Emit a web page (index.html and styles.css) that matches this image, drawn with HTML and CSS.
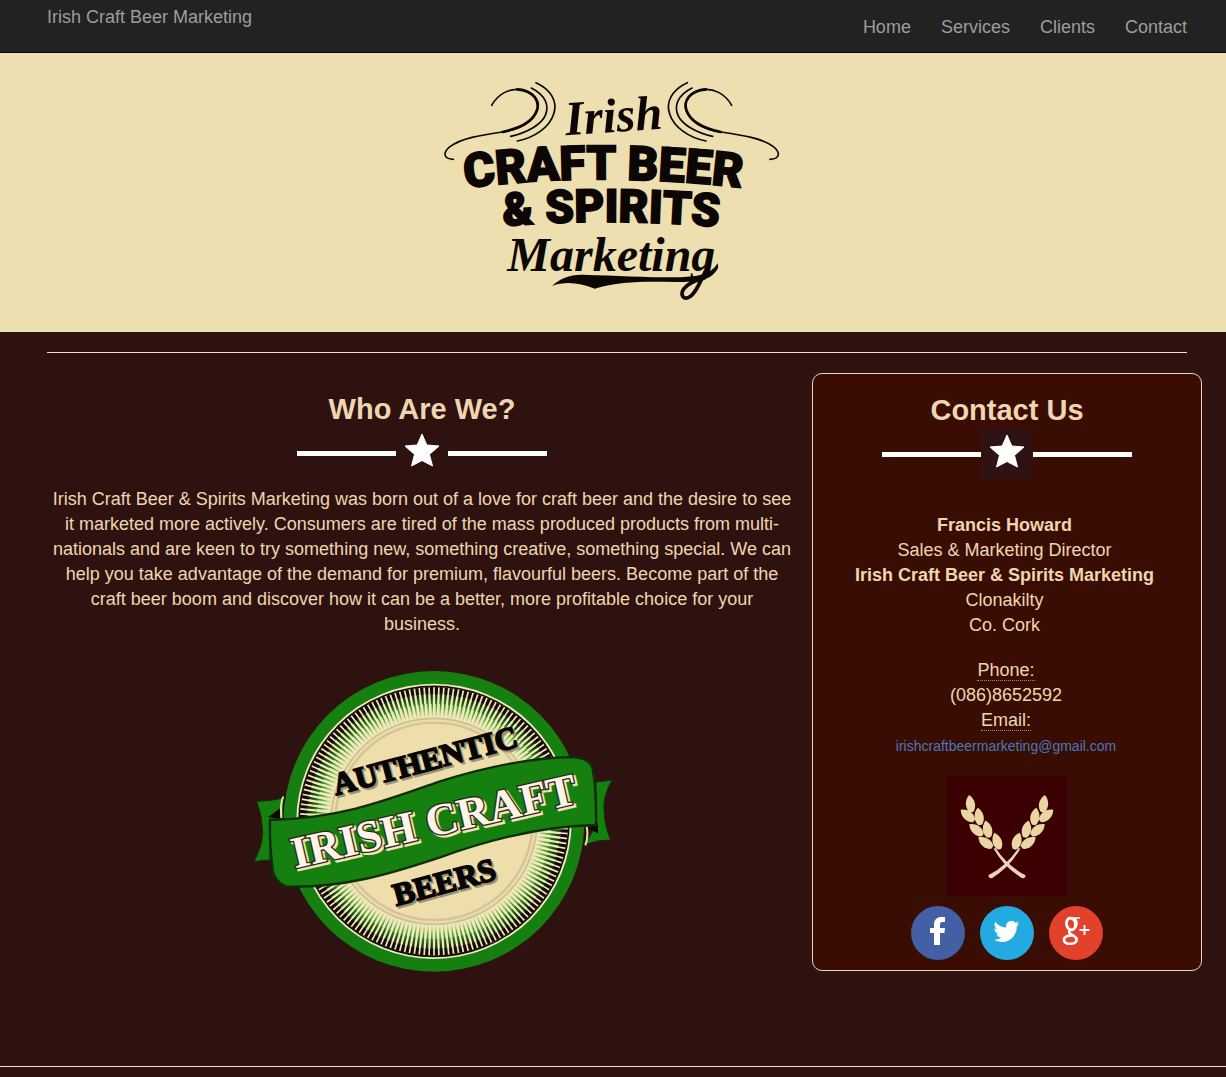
FILE: index.html
```html
<!DOCTYPE html>
<html lang="en">
<head>
<meta charset="utf-8">
<title>Irish Craft Beer Marketing</title>
<meta name="viewport" content="width=device-width, initial-scale=1">
<link rel="stylesheet" href="styles.css">
</head>
<body>
<nav class="navbar">
  <div class="container navbar-inner">
    <a class="brand" href="#">Irish Craft Beer Marketing</a>
    <ul class="nav-links">
      <li><a href="#home">Home</a></li>
      <li><a href="#services">Services</a></li>
      <li><a href="#clients">Clients</a></li>
      <li><a href="#contact">Contact</a></li>
    </ul>
  </div>
</nav>

<header class="masthead" id="home">
  <svg class="logo" viewBox="0 0 1080 720" role="img" aria-label="Irish Craft Beer &amp; Spirits Marketing">
    <defs>
      <path id="arc-craft" d="M106 354Q535 300 985 360"/>
      <path id="arc-spirits" d="M220 468Q550 442 900 474"/>
      <g id="flourish" fill="none" stroke="#0c0705" stroke-linecap="round">
        <path stroke-width="5" d="M185 106C205 70 240 54 274 59C310 66 328 93 322 119C313 155 270 177 218 186C150 196 95 204 60 230C40 246 37 266 70 268"/>
        <path stroke-width="8" d="M262 58C312 62 330 94 321 120C310 153 270 175 218 186"/>
        <path stroke-width="5" d="M304 54C348 76 358 108 346 136C334 163 294 187 242 199"/>
        <path stroke-width="5" d="M318 38C362 58 384 94 371 132C359 171 314 203 262 213"/>
      </g>
    </defs>
    <use href="#flourish"/>
    <use href="#flourish" transform="matrix(-1 0 0 1 1090 0)"/>
    <text class="logo-script" font-size="146" transform="translate(408 196) rotate(-4)">Irish</text>
    <text class="logo-block" font-size="143"><textPath href="#arc-craft">CRAFT BEER</textPath></text>
    <text class="logo-block" font-size="138"><textPath href="#arc-spirits">&amp; SPIRITS</textPath></text>
    <text class="logo-script" font-size="144" x="232" y="602">Marketing</text>
    <path d="M366 648C390 625 420 613 458 614C560 617 640 622 740 622C800 622 846 612 862 580C868 592 862 600 856 606C834 636 780 636 736 636C660 634 570 632 494 656C450 640 410 632 366 648Z" fill="#0c0705"/>
    <path d="M826 604C812 632 797 672 776 682C758 690 750 672 762 656C772 644 792 632 812 628" fill="none" stroke="#0c0705" stroke-width="11"/>
  </svg>
</header>

<div class="container">
  <hr class="rule">
  <main class="columns">
    <section class="about">
      <h2>Who Are We?</h2>
      <div class="divider">
        <span class="divider-star"><svg viewBox="0 0 36 34" aria-hidden="true"><path d="M18 1L22.800 12L35 13L25.500 21.400L28.500 33L18 27.500L7.500 33L10.500 21.400L1 13L13.200 12Z"/></svg></span>
      </div>
      <p>Irish Craft Beer &amp; Spirits Marketing was born out of a love for craft beer and the desire to see it marketed more actively. Consumers are tired of the mass produced products from multi-nationals and are keen to try something new, something creative, something special. We can help you take advantage of the demand for premium, flavourful beers. Become part of the craft beer boom and discover how it can be a better, more profitable choice for your business.</p>
      <svg class="badge" viewBox="39 30 1080 912" role="img" aria-label="Authentic Irish Craft Beers">
        <defs>
          <radialGradient id="rays" gradientUnits="userSpaceOnUse" cx="582" cy="484" r="408">
            <stop offset=".76" stop-color="#62b13d" stop-opacity="0"/>
            <stop offset=".84" stop-color="#42a12a"/>
            <stop offset=".91" stop-color="#14450d"/>
            <stop offset=".95" stop-color="#130907"/>
          </radialGradient>
        </defs>
        <path d="M50 424Q90 424 130 414V470L90 480V600Q66 600 42 606Q66 560 68 520Q68 470 50 424Z" fill="#15800f" stroke="#102d0a" stroke-width="3"/>
        <path d="M1068 366Q1092 364 1116 360Q1088 410 1092 450Q1094 500 1112 540Q1076 538 1034 554L1068 495Z" fill="#15800f" stroke="#102d0a" stroke-width="3"/>
        <path d="M84 472L126 440V476ZM1040 505L1074 488V520Z" fill="#0b0b06"/>
        <path d="M124 474Q120 430 130 410M1036 556Q1046 530 1040 500" fill="none" stroke="#eee0b0" stroke-width="6"/>
        <circle cx="582" cy="484" r="451" fill="#15800f"/>
        <circle cx="582" cy="484" r="413" fill="#f2ecc5"/>
        <circle cx="582" cy="484" r="405" fill="#f1e8bd" stroke="#160d08" stroke-width="5"/>
        <g fill="none" stroke="url(#rays)">
          <circle cx="582" cy="484" r="392" stroke-width="22" pathLength="340" stroke-dasharray="1.300 .700" stroke-dashoffset=".650"/>
          <circle cx="582" cy="484" r="367" stroke-width="30" pathLength="340" stroke-dasharray="1 1" stroke-dashoffset=".500"/>
          <circle cx="582" cy="484" r="333" stroke-width="40" pathLength="340" stroke-dasharray=".700 1.300" stroke-dashoffset=".350"/>
        </g>
        <circle cx="582" cy="484" r="309" fill="#eadcab" stroke="#cfbf90" stroke-width="5"/>
        <circle cx="582" cy="484" r="296" fill="#eddeac" stroke="#d4c497" stroke-width="7"/>
        <path d="M90 480C300 475 430 424 600 364C740 320 900 288 1005 292Q1050 296 1058 326Q1070 400 1068 495C910 498 750 538 600 592C450 642 310 684 140 680Q104 666 98 630Q88 550 90 480Z" fill="#15800f" stroke="#112e0b" stroke-width="7"/>
        <g class="badge-shadow">
          <text font-size="94" transform="translate(294 412) rotate(-15)">AUTHENTIC</text>
          <text font-size="96" transform="translate(475 744) rotate(-15)">BEERS</text>
        </g>
        <g class="badge-dark">
          <text font-size="94" transform="translate(288 406) rotate(-15)">AUTHENTIC</text>
          <text font-size="96" transform="translate(469 738) rotate(-15)">BEERS</text>
        </g>
        <text class="badge-shade" font-size="134" transform="translate(172 631) rotate(-13)">IRISH CRAFT</text>
        <text class="badge-light" font-size="134" transform="translate(165 625) rotate(-13)">IRISH CRAFT</text>
      </svg>
    </section>

    <aside class="contact" id="contact">
      <h2>Contact Us</h2>
      <div class="divider">
        <span class="divider-star"><svg viewBox="0 0 36 34" aria-hidden="true"><path d="M18 1L22.800 12L35 13L25.500 21.400L28.500 33L18 27.500L7.500 33L10.500 21.400L1 13L13.200 12Z"/></svg></span>
      </div>
      <address>
        <strong>Francis Howard</strong><br>
        Sales &amp; Marketing Director<br>
        <strong>Irish Craft Beer &amp; Spirits Marketing</strong><br>
        Clonakilty<br>
        Co. Cork
      </address>
      <address class="reach">
        <abbr title="Phone">Phone:</abbr><br>
        (086)8652592<br>
        <abbr title="Email">Email:</abbr><br>
        <a class="email" href="mailto:irishcraftbeermarketing@gmail.com">irishcraftbeermarketing@gmail.com</a>
      </address>
      <svg class="wheat" viewBox="174 108 360 360" role="img" aria-label="Crossed ears of barley">
        <defs>
          <path id="grain" d="M0 -26C18 -10 17 14 5 26H-5C-17 14 -18 -10 0 -26Z"/>
          <g id="ear">
            <g fill="#e9d6a3">
              <use href="#grain" transform="translate(244 191) rotate(-8)"/>
              <use href="#grain" transform="translate(270 229) rotate(-8)"/>
              <use href="#grain" transform="translate(295 267) rotate(-12)"/>
              <use href="#grain" transform="translate(324 303) rotate(-18)"/>
              <use href="#grain" transform="translate(235 226) rotate(-50)"/>
              <use href="#grain" transform="translate(261 269) rotate(-50)"/>
              <use href="#grain" transform="translate(289 307) rotate(-54)"/>
            </g>
            <path d="M314 326Q344 380 398 414Q408 418 410 406Q356 378 319 323Z" fill="#f0cfc0"/>
          </g>
        </defs>
        <use href="#ear"/>
        <use href="#ear" transform="matrix(-1 0 0 1 708 0)"/>
      </svg>
      <div class="social">
        <a class="facebook" href="#facebook" aria-label="Facebook"><svg viewBox="0 0 54 54" aria-hidden="true"><path d="M23 39V27H19V22H23V19C23 13.500 26 11 30.500 11H34V16H31.500C29.500 16 29 17 29 18.500V22H34L33.400 27H29V39Z"/></svg></a>
        <a class="twitter" href="#twitter" aria-label="Twitter"><svg viewBox="0 0 54 54" aria-hidden="true"><path transform="translate(13.500 12.500) scale(1.080)" d="M23.950 4.570a10 10 0 0 1-2.820.780 4.960 4.960 0 0 0 2.160-2.720c-.950.550-2 .960-3.130 1.190a4.920 4.920 0 0 0-8.380 4.480C7.690 8.090 4.070 6.130 1.640 3.160a4.820 4.820 0 0 0-.670 2.480c0 1.710.870 3.210 2.190 4.100a4.900 4.900 0 0 1-2.230-.620v.060a4.920 4.920 0 0 0 3.950 4.830 5 5 0 0 1-2.210.080 4.940 4.940 0 0 0 4.600 3.420A9.870 9.870 0 0 1 0 19.540a13.990 13.990 0 0 0 7.550 2.210c9.050 0 14-7.500 14-13.980 0-.210 0-.420-.020-.630a9.930 9.930 0 0 0 2.420-2.570z"/></svg></a>
        <a class="google" href="#google" aria-label="Google Plus"><svg viewBox="0 0 54 54" aria-hidden="true"><g fill="none" stroke="#fff"><ellipse cx="22" cy="18" rx="4.500" ry="6" stroke-width="2.800" transform="rotate(-12 22 18)"/><path stroke-width="1.600" d="M22 12H31M26.500 13C29 16 28.500 20 25.500 22"/><path stroke-width="2.600" d="M21 24C19 26.500 21 28 25 30C30 33 27.500 37.800 21.500 37.800C13.500 37.800 13 31.500 19.500 29.800C22 29.200 23 29.200 25 29.500"/><path stroke-width="1.800" d="M35.500 19V29M30.500 24H40.500"/></g></svg></a>
      </div>
    </aside>
  </main>
</div>
<footer class="footer"></footer>
</body>
</html>
```
FILE: styles.css
```css
* { box-sizing: border-box; }

body {
  margin: 0;
  background: #2e1210;
  color: #efd6b0;
  font: 18px/25px "Liberation Sans", Arial, sans-serif;
}

.container {
  max-width: 1226px;
  margin: 0 auto;
  padding: 0 24px 0 32px;
}

.navbar {
  background: #222;
  border-bottom: 1px solid #080808;
}
.navbar-inner {
  display: flex;
  justify-content: space-between;
  min-height: 52px;
  padding: 5px 39px 11px 47px;
}
.navbar a { color: #9d9d9d; text-decoration: none; }
.nav-links {
  display: flex;
  gap: 30px;
  margin: 0;
  padding: 10px 0 0;
  list-style: none;
}

.masthead {
  padding: 17px 6px 22px 0;
  background: #eddfb0;
}
.logo {
  display: block;
  width: 360px;
  height: 240px;
  margin: 0 auto;
}
.logo text { fill: #0c0705; }
.logo-script { font-family: "Liberation Serif", serif; font-weight: bold; font-style: italic; }
.logo-block {
  font-family: Roboto, sans-serif;
  font-weight: 900;
  stroke: #0c0705;
  stroke-width: 5px;
}

.rule {
  height: 1px;
  margin: 20px 15px;
  border: 0;
  background: #f3dfc9;
}

.columns {
  display: grid;
  grid-template-columns: 2fr 1fr;
  align-items: start;
}
.about { padding: 0 15px; text-align: center; }

h2 {
  margin: 0 0 2px;
  font-size: 29px;
  line-height: 33px;
  font-weight: bold;
}
.about h2 { padding-top: 20px; }

.divider {
  display: flex;
  align-items: center;
  justify-content: center;
  gap: 1px;
  width: 250px;
  height: 50px;
  margin: 0 auto;
}
.divider::before,
.divider::after {
  content: "";
  flex: 1;
  height: 5px;
  background: #fff;
}
.divider-star {
  display: grid;
  place-items: center;
  width: 50px;
  height: 50px;
  padding-bottom: 6px;
  background: #2e1214;
}
.about .divider-star { background: none; }
.divider-star svg {
  width: 36px;
  height: 34px;
  fill: #fff;
  stroke: #fff;
  stroke-linejoin: round;
}

.about p { margin: 9px 0 33px; padding: 0 4px; }
.badge {
  display: block;
  width: 360px;
  max-width: 100%;
  height: 304px;
  margin: 0 auto;
  position: relative;
  left: 11px;
}
.badge text { font-family: "Liberation Serif", serif; font-weight: bold; }
.badge-shadow { fill: #9b9170; stroke: #9b9170; stroke-width: 5px; }
.badge-dark { fill: #080605; stroke: #080605; stroke-width: 5px; }
.badge-shade { fill: #f2e3bd; stroke: #f2e3bd; stroke-width: 8px; }
.badge-light { fill: #fcf4e4; stroke: #312716; stroke-width: 8px; paint-order: stroke; }

.contact {
  padding: 20px 14px 10px;
  border: 1px solid #f1d5b5;
  border-radius: 10px;
  background: #3a0d04;
  text-align: center;
}
address {
  margin: 0 0 20px;
  padding-right: 5px;
  font-style: normal;
}
.reach { margin-bottom: 17px; padding-right: 2px; }
.contact .divider { margin-bottom: 34px; }
abbr { text-decoration: none; border-bottom: 1px dotted #a78a70; }
.email { color: #4878b8; font-size: 14px; text-decoration: none; }
.wheat {
  display: block;
  width: 120px;
  height: 120px;
  margin: 0 auto 10px;
  background: #3c0003;
}
.social { display: flex; justify-content: center; gap: 15px; }
.social a {
  width: 54px;
  height: 54px;
  border-radius: 50%;
}
.social svg { display: block; fill: #fff; }
.facebook { background: #4460a5; }
.twitter { background: #23aae1; }
.google { background: #e2412b; }

.footer {
  height: 11px;
  margin-top: 92px;
  border-top: 1px solid #f3dfc9;
}
```
